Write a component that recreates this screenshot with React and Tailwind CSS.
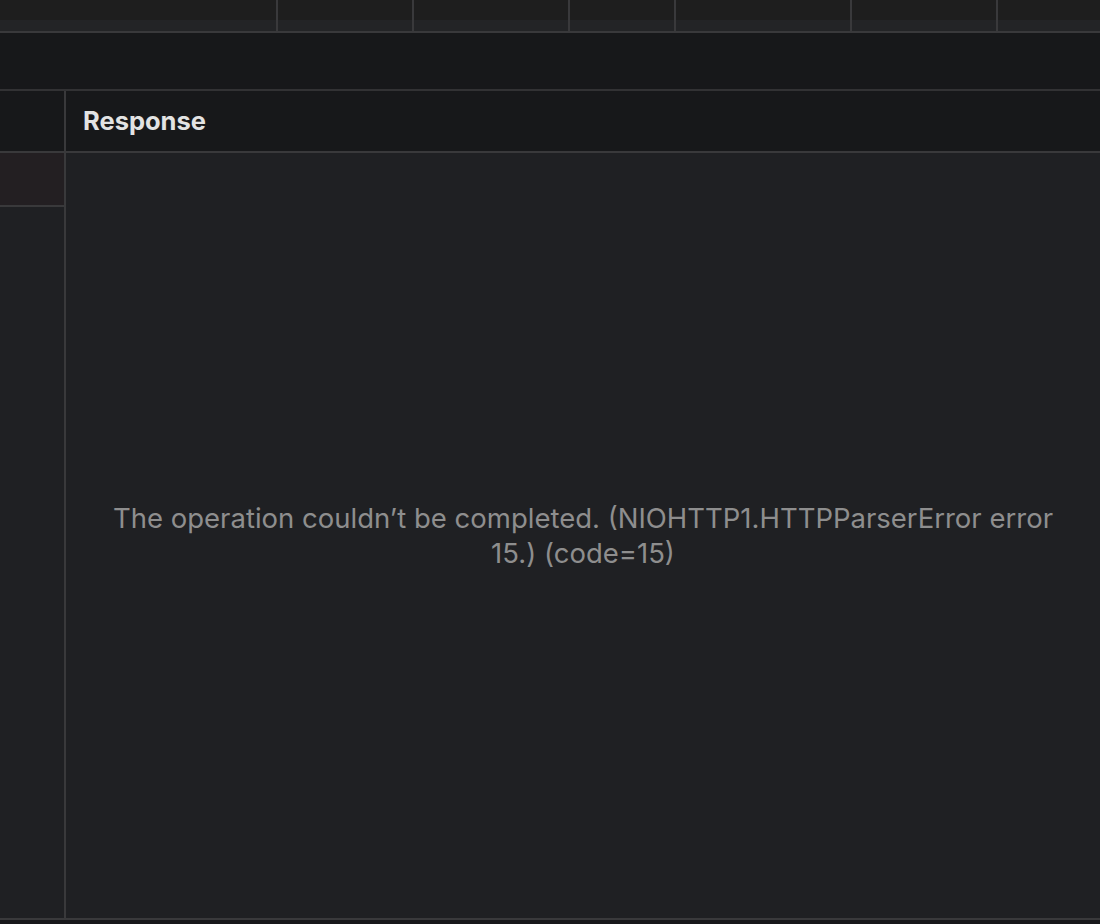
import React from 'react';

const cols = [276, 136, 156, 106, 176, 146, 104];

const App = () => {
  return (
    <div className="w-[1100px] h-[924px] flex flex-col bg-[#17181a] overflow-hidden" style={{ fontFamily: 'Inter, "Liberation Sans", Arial, sans-serif' }}>
      {/* column header strip */}
      <div className="flex h-[31px] shrink-0">
        {cols.map((w, i) => (
          <div key={i} className={`flex flex-col shrink-0 ${i > 0 ? 'border-l-2 border-[#39393b]' : ''}`} style={{ width: w }}>
            <div className="h-[20px] bg-[#1e1e1e]"></div>
            <div className="flex-1 bg-[#232426]"></div>
          </div>
        ))}
      </div>
      <div className="h-[2px] bg-[#39393b] shrink-0"></div>

      {/* toolbar band */}
      <div className="h-[56px] bg-[#17181a] shrink-0"></div>
      <div className="h-[2px] bg-[#323234] shrink-0"></div>

      {/* body */}
      <div className="flex h-[827px] shrink-0">
        <div className="w-[64px] flex flex-col shrink-0">
          <div className="h-[60px] bg-[#17181a]"></div>
          <div className="h-[2px] bg-[#39393b]"></div>
          <div className="h-[52px] bg-[#231f22]"></div>
          <div className="h-[2px] bg-[#39393b]"></div>
          <div className="flex-1 bg-[#1f2023]"></div>
        </div>
        <div className="w-[2px] bg-[#39393b] shrink-0"></div>
        <div className="flex-1 flex flex-col">
          <div className="h-[60px] bg-[#17181a] flex items-center pl-[17px]">
            <span className="text-[25.5px] font-bold text-[#e3e3e3]">Response</span>
          </div>
          <div className="h-[2px] bg-[#39393b]"></div>
          <div className="flex-1 bg-[#1f2023] flex items-center justify-center px-[40px]">
            <p className="text-[27.5px] leading-[35px] text-[#8e8e8e] text-center">
              The operation couldn’t be completed. (NIOHTTP1.HTTPParserError error 15.) (code=15)
            </p>
          </div>
        </div>
      </div>
      <div className="h-[2px] bg-[#39393b] shrink-0"></div>
      <div className="flex-1 bg-[#17181a]"></div>
    </div>
  );
};

export default App;
